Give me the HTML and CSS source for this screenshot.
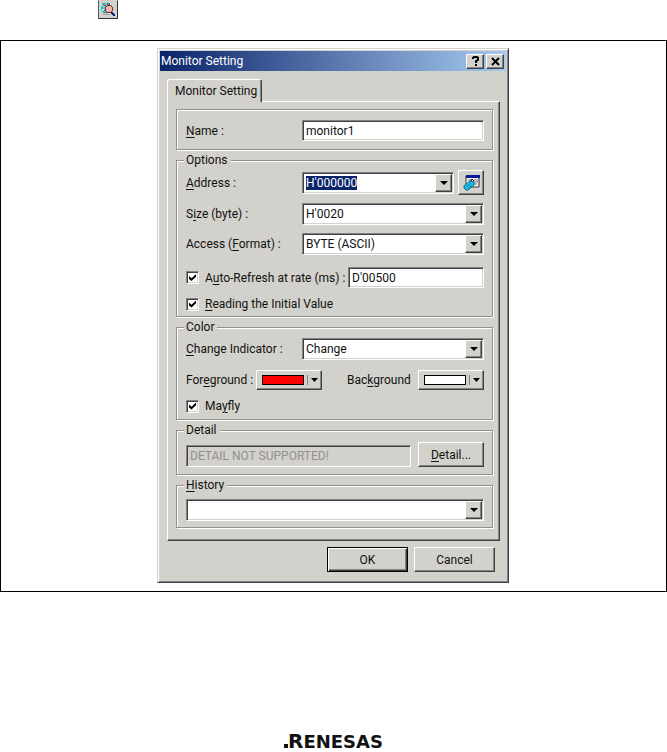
FILE: index.html
```html
<!DOCTYPE html>
<html lang="en">
<head>
  <meta charset="UTF-8">
  <meta name="viewport" content="width=device-width, initial-scale=1.0">
  <title>Monitor Setting</title>
  <link rel="stylesheet" href="styles.css">
</head>
<body>
  <header class="toolbar">
    <button class="tool" type="button" aria-label="Monitor Setting">
      <svg width="18" height="17" viewBox="0 0 18 17" shape-rendering="crispEdges">
        <path d="M3 2h9v1h1v8h-1v1H4v-1H3v-1H2V4h1z" fill="#42cfd8"/>
        <path d="M2 4h1v1H2zM4 4h1v2H4zM3 8h2v1H3zM11 2h1v2h-1z" fill="#e8ffff"/>
        <path d="M4 2h2v1H4zM8 2h3v1H8zM3 6h1v2H3zM4 11h4v1H4z" fill="#278c98"/>
        <path d="M4 4h3v1H4zM8 3h3v1H8zM5 9h2v1H5z" fill="#e03030"/>
        <path d="M8 5h4v1h1v4h-1v1H8v-1H7V6h1z" fill="#f0b4ae"/>
        <path d="M8 4h4v1H8zM12 5h1v1h-1zM13 6h1v4h-1zM12 10h1v1h-1zM8 11h4v1H8zM6 6h1v4H6zM7 5h1v1H7zM7 10h1v1H7z" fill="#8c2830"/>
        <path d="M12 11h2v1h1v1h1v2h-2v-1h-1v-1h-1z" fill="#18207c"/>
        <path d="M4 13h7v1H4z" fill="#999"/>
      </svg>
    </button>
  </header>

  <main class="figure">
    <form class="dialog" onsubmit="return false">
      <div class="titlebar">
        <h1>Monitor Setting</h1>
        <button type="button" aria-label="Help">
          <svg width="9" height="10" viewBox="0 0 9 10"><path d="M2 3V2L3 1h3l1 1v2L5 5v2M5 8v2" fill="none" stroke="#000" stroke-width="2"/></svg>
        </button>
        <button type="button" aria-label="Close">
          <svg width="9" height="9" viewBox="0 0 9 9"><path d="M1 1l7 7M8 1L1 8" fill="none" stroke="#000" stroke-width="2"/></svg>
        </button>
      </div>

      <div class="content">
        <div class="tabs" role="tablist">
          <button class="tab" type="button" role="tab" aria-selected="true">Monitor Setting</button>
        </div>

        <div class="panel">
          <fieldset class="group name">
            <div class="row">
              <label for="name"><u>N</u>ame :</label>
              <input class="field" id="name" type="text" value="monitor1">
            </div>
          </fieldset>

          <fieldset class="group options">
            <legend>Options</legend>
            <div class="row address">
              <label for="address"><u>A</u>ddress :</label>
              <div class="combo">
                <input id="address" type="text" value="H'000000">
                <button class="drop" type="button" aria-label="Address list"><svg width="8" height="4"><path d="M0 0h8L4 4z"/></svg></button>
              </div>
              <button class="btn lookup" type="button" aria-label="Select label">
                <svg width="17" height="17" viewBox="0 0 17 17">
                  <path d="M3 2h13v11H3z" fill="#f4f4f4" stroke="#333"/>
                  <path d="M3 1h14v3H3z" fill="#0c1c98"/>
                  <path d="M5 6h4M11 6h4M11 8h4M10 10h4" stroke="#777"/>
                  <path d="M1 12l6-5 4 1v3l-6 5H3l-2-2z" fill="#22c9e8" stroke="#075b86"/>
                  <path d="M3 13l5-4M5 14l4-3" stroke="#0879c8"/>
                  <path d="M8 7l1-2 2 2" fill="none" stroke="#111"/>
                </svg>
              </button>
            </div>
            <div class="row">
              <label for="size">S<u>i</u>ze (byte) :</label>
              <div class="combo">
                <select id="size"><option>H'0020</option></select>
                <span class="drop"><svg width="8" height="4"><path d="M0 0h8L4 4z"/></svg></span>
              </div>
            </div>
            <div class="row">
              <label for="access">Access (<u>F</u>ormat) :</label>
              <div class="combo">
                <select id="access"><option>BYTE (ASCII)</option></select>
                <span class="drop"><svg width="8" height="4"><path d="M0 0h8L4 4z"/></svg></span>
              </div>
            </div>
            <div class="row refresh">
              <label class="check"><input type="checkbox" checked><span>A<u>u</u>to-Refresh at rate (ms) :</span></label>
              <input class="field" type="text" value="D'00500" aria-label="Refresh rate (ms)">
            </div>
            <label class="check"><input type="checkbox" checked><span><u>R</u>eading the Initial Value</span></label>
          </fieldset>

          <fieldset class="group color">
            <legend>Color</legend>
            <div class="row">
              <label for="indicator"><u>C</u>hange Indicator :</label>
              <div class="combo">
                <select id="indicator"><option>Change</option></select>
                <span class="drop"><svg width="8" height="4"><path d="M0 0h8L4 4z"/></svg></span>
              </div>
            </div>
            <div class="swatches">
              <label for="foreground">For<u>e</u>ground :</label>
              <button class="btn swatch" id="foreground" type="button">
                <span class="chip red"></span>
                <svg width="7" height="4"><path d="M0 0h7L3.500 4z"/></svg>
              </button>
              <label class="second" for="background">Bac<u>k</u>ground</label>
              <button class="btn swatch" id="background" type="button">
                <span class="chip"></span>
                <svg width="7" height="4"><path d="M0 0h7L3.500 4z"/></svg>
              </button>
            </div>
            <label class="check"><input type="checkbox" checked><span>Ma<u>y</u>fly</span></label>
          </fieldset>

          <fieldset class="group detail">
            <legend>Detail</legend>
            <div class="detail-row">
              <input class="field" type="text" value="DETAIL NOT SUPPORTED!" aria-label="Detail" disabled>
              <button class="btn" type="button"><span><u>D</u>etail...</span></button>
            </div>
          </fieldset>

          <fieldset class="group history">
            <legend><label for="history"><u>H</u>istory</label></legend>
            <div class="combo">
              <select id="history"><option></option></select>
              <span class="drop"><svg width="8" height="4"><path d="M0 0h8L4 4z"/></svg></span>
            </div>
          </fieldset>
        </div>

        <div class="actions">
          <button class="btn default" type="submit">OK</button>
          <button class="btn" type="button">Cancel</button>
        </div>
      </div>
    </form>
  </main>

  <footer class="brand"><span class="dot"></span><span class="initial">R</span>ENESAS</footer>

  <script>
    document.getElementById('address').select();
  </script>
</body>
</html>
```
FILE: styles.css
```css
* {
  box-sizing: border-box;
}
body {
  margin: 0;
  background: #fff;
  color: #111;
  font-family: Roboto, "Liberation Sans", sans-serif;
  font-size: 12px;
  line-height: 14px;
}
button, input, select {
  font: inherit;
  color: inherit;
  margin: 0;
  padding: 0;
  border-radius: 0;
}
svg {
  display: block;
  flex: none;
}
u {
  text-underline-offset: 2px;
}
.toolbar {
  height: 40px;
  padding-left: 98px;
}
.tool {
  display: block;
  width: 20px;
  height: 19px;
  background: #d3d1cb;
  border: 1px solid;
  border-color: #d3d1cb #333 #333 #555;
}
.figure {
  border: 1px solid #000;
  padding: 7px 1px 8px 0;
}
.dialog {
  width: 352px;
  max-width: 100%;
  margin: 0 auto;
  padding: 2px;
  background: #d3d1cb;
  border: 1px solid;
  border-color: #d3d1cb #404044 #404044 #d3d1cb;
  box-shadow: inset 1px 1px #fff, inset -1px -1px #848284;
}
.titlebar {
  display: flex;
  align-items: center;
  gap: 2px;
  height: 20px;
  padding: 0 2px 0 1px;
  background: linear-gradient(to right, #0a246a, #a6caf0);
  color: #fff;
}
.titlebar h1 {
  flex: 1;
  margin: 0;
  font-size: 12px;
  font-weight: normal;
}
.titlebar button {
  display: flex;
  align-items: center;
  justify-content: center;
  width: 18px;
  height: 15px;
}
.btn, .drop, .titlebar button {
  background: #d3d1cb;
  border: 1px solid;
  border-color: #fff #404044 #404044 #fff;
  box-shadow: inset -1px -1px #848284;
}
.content {
  padding: 8px 6px 8px 7px;
}
.tabs {
  display: flex;
}
.tab {
  position: relative;
  height: 23px;
  margin-bottom: -1px;
  padding: 0 4px 0 7px;
  background: #d3d1cb;
  border: 1px solid;
  border-color: #fff #404044 #d3d1cb #fff;
  border-bottom: 0;
  border-radius: 3px 2px 0 0;
  box-shadow: inset -1px 0 #848284;
}
.panel {
  display: flex;
  flex-direction: column;
  gap: 3px;
  padding: 7px 6px 12px 8px;
  border: 1px solid;
  border-color: #fff #404044 #404044 #fff;
  box-shadow: inset -1px -1px #848284;
}
.group {
  min-width: 0;
  margin: 0;
  padding: 4px 8px 6px 9px;
  border: 1px solid #929092;
  box-shadow: 1px 1px #fff, inset 1px 1px #fff;
}
.group legend {
  padding: 0 3px 0 2px;
  margin-left: -2px;
  background: #d3d1cb;
}
.name {
  padding-top: 10px;
  padding-bottom: 8px;
}
.options {
  padding-top: 3px;
  padding-bottom: 5px;
}
.detail {
  padding-top: 5px;
  padding-bottom: 7px;
}
.history {
  padding-top: 7px;
}
.row {
  display: grid;
  grid-template-columns: 116px 1fr;
  align-items: center;
  margin-bottom: 8px;
}
.name .row {
  margin-bottom: 0;
}
.row.address {
  grid-template-columns: 116px 1fr 26px;
}
.row.refresh {
  grid-template-columns: 162px 1fr;
  margin: 12px 0 9px;
}
.field, .combo {
  width: 100%;
  min-width: 0;
  background: #fff;
  border: 1px solid;
  border-color: #848284 #fff #fff #848284;
  box-shadow: inset 1px 1px #404044, inset -1px -1px #d3d1cb;
}
.field {
  height: 21px;
  padding: 0 3px;
  outline: 0;
}
.field:disabled {
  background: #d3d1cb;
  color: #929092;
}
.combo {
  display: flex;
  position: relative;
  height: 22px;
  padding: 1px;
}
.address .combo {
  width: auto;
  margin-right: 4px;
}
.combo input, .combo select {
  flex: 1;
  min-width: 0;
  padding-left: 2px;
  background: transparent;
  border: 0;
  outline: 0;
  appearance: none;
}
.combo input::selection {
  background: #0a246a;
  color: #fff;
}
.drop {
  display: flex;
  align-items: center;
  justify-content: center;
  width: 17px;
  pointer-events: none;
}
button.drop {
  pointer-events: auto;
}
.btn {
  display: flex;
  align-items: center;
  justify-content: center;
  height: 25px;
}
.check {
  display: flex;
  align-items: center;
  gap: 6px;
  white-space: nowrap;
}
.check input {
  appearance: none;
  display: grid;
  place-items: center;
  width: 13px;
  height: 13px;
  background: #fff;
  border: 1px solid;
  border-color: #848284 #fff #fff #848284;
  box-shadow: inset 1px 1px #404044, inset -1px -1px #d3d1cb;
}
.check input:checked::before {
  content: "";
  width: 7px;
  height: 7px;
  background: #000;
  clip-path: polygon(0 29%, 36% 60%, 100% 0, 100% 40%, 36% 100%, 0 70%);
}
.color .row {
  margin-bottom: 10px;
}
.swatches {
  display: grid;
  grid-template-columns: 70px 66px 1fr 66px;
  align-items: center;
  margin-bottom: 9px;
}
.second {
  padding-left: 25px;
}
.swatch {
  justify-content: flex-start;
  height: 20px;
  padding-left: 5px;
  gap: 3px;
}
.chip {
  width: 42px;
  height: 10px;
  border: 1px solid #000;
  background: #fff;
}
.chip.red {
  background: #f00;
}
.swatch svg {
  width: 11px;
  padding-left: 3px;
  height: 10px;
  padding-top: 3px;
  border-left: 1px solid #848284;
}
.detail-row {
  display: grid;
  grid-template-columns: 1fr 66px;
  align-items: end;
  gap: 7px;
}
.detail-row .field {
  height: 22px;
}
.actions {
  display: flex;
  justify-content: flex-end;
  gap: 6px;
  padding: 6px 5px 0 0;
}
.actions .btn {
  width: 81px;
}
.actions .default {
  border-color: #000;
  box-shadow: inset 1px 1px #fff, inset -1px -1px #404044, inset -2px -2px #848284;
}
.brand {
  display: flex;
  align-items: baseline;
  justify-content: center;
  margin-top: 138px;
  font-family: "DejaVu Sans", sans-serif;
  font-size: 18px;
  font-weight: bold;
  line-height: 22px;
}
.dot {
  width: 4px;
  height: 4px;
  background: #111;
}
.initial {
  font-size: 20px;
}
```
